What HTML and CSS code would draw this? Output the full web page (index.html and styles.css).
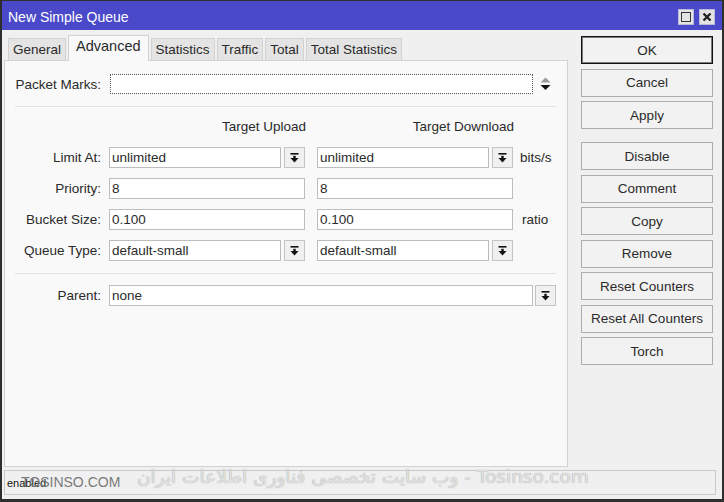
FILE: index.html
```html
<!DOCTYPE html>
<html>
<head>
    <title>New Simple Queue</title>
    <link rel="stylesheet" href="styles.css">
</head>
<body>
    <div class="window">
        <div class="titlebar">
            <span class="title">New Simple Queue</span>
            <div class="winbtns">
                <span class="winbtn"><span class="maxbox"></span></span>
                <span class="winbtn close">
                    <svg width="10" height="10" viewBox="0 0 10 10"><path d="M1.5 1.5 L8.5 8.5 M8.5 1.5 L1.5 8.5" stroke="#222" stroke-width="2.4"/></svg>
                </span>
            </div>
        </div>

        <div class="main">
            <div class="left">
                <div class="tabs">
                    <span class="tab">General</span>
                    <span class="tab active">Advanced</span>
                    <span class="tab">Statistics</span>
                    <span class="tab">Traffic</span>
                    <span class="tab">Total</span>
                    <span class="tab">Total Statistics</span>
                </div>

                <div class="panel">
                    <div class="row marks">
                        <label class="lbl">Packet Marks:</label>
                        <div class="field dotted"></div>
                        <svg class="spin" width="11" height="14" viewBox="0 0 11 14">
                            <path d="M5.5 0.5 L10.5 5.5 L0.5 5.5 Z" fill="#9a9a9a"/>
                            <path d="M0.5 8 L10.5 8 L5.5 13 Z" fill="#111"/>
                        </svg>
                    </div>

                    <div class="sep"></div>

                    <div class="heads">
                        <span class="head">Target Upload</span>
                        <span class="head">Target Download</span>
                    </div>

                    <div class="rows">
                        <div class="row">
                            <label class="lbl">Limit At:</label>
                            <div class="field short">unlimited</div>
                            <span class="drop"><svg width="9" height="10" viewBox="0 0 9 10"><rect x="0.5" y="0" width="8" height="1.6" fill="#111"/><rect x="3.3" y="2.8" width="2.4" height="2.4" fill="#111"/><path d="M0.5 5 L8.5 5 L4.5 9.5 Z" fill="#111"/></svg></span>
                            <div class="field short second">unlimited</div>
                            <span class="drop"><svg width="9" height="10" viewBox="0 0 9 10"><rect x="0.5" y="0" width="8" height="1.6" fill="#111"/><rect x="3.3" y="2.8" width="2.4" height="2.4" fill="#111"/><path d="M0.5 5 L8.5 5 L4.5 9.5 Z" fill="#111"/></svg></span>
                            <span class="unit">bits/s</span>
                        </div>
                        <div class="row">
                            <label class="lbl">Priority:</label>
                            <div class="field wide">8</div>
                            <div class="field wide second">8</div>
                        </div>
                        <div class="row">
                            <label class="lbl">Bucket Size:</label>
                            <div class="field wide">0.100</div>
                            <div class="field wide second">0.100</div>
                            <span class="unit ratio">ratio</span>
                        </div>
                        <div class="row">
                            <label class="lbl">Queue Type:</label>
                            <div class="field short">default-small</div>
                            <span class="drop"><svg width="9" height="10" viewBox="0 0 9 10"><rect x="0.5" y="0" width="8" height="1.6" fill="#111"/><rect x="3.3" y="2.8" width="2.4" height="2.4" fill="#111"/><path d="M0.5 5 L8.5 5 L4.5 9.5 Z" fill="#111"/></svg></span>
                            <div class="field short second">default-small</div>
                            <span class="drop"><svg width="9" height="10" viewBox="0 0 9 10"><rect x="0.5" y="0" width="8" height="1.6" fill="#111"/><rect x="3.3" y="2.8" width="2.4" height="2.4" fill="#111"/><path d="M0.5 5 L8.5 5 L4.5 9.5 Z" fill="#111"/></svg></span>
                        </div>
                    </div>

                    <div class="sep low"></div>

                    <div class="row parent">
                        <label class="lbl">Parent:</label>
                        <div class="field long">none</div>
                        <span class="drop tight"><svg width="9" height="10" viewBox="0 0 9 10"><rect x="0.5" y="0" width="8" height="1.6" fill="#111"/><rect x="3.3" y="2.8" width="2.4" height="2.4" fill="#111"/><path d="M0.5 5 L8.5 5 L4.5 9.5 Z" fill="#111"/></svg></span>
                    </div>
                </div>
            </div>

            <div class="side">
                <button class="btn default">OK</button>
                <button class="btn">Cancel</button>
                <button class="btn">Apply</button>
                <div class="gap"></div>
                <button class="btn">Disable</button>
                <button class="btn">Comment</button>
                <button class="btn">Copy</button>
                <button class="btn">Remove</button>
                <button class="btn">Reset Counters</button>
                <button class="btn">Reset All Counters</button>
                <button class="btn">Torch</button>
            </div>
        </div>

        <div class="status">enabled</div>

        <!-- watermark burned into the screenshot -->
        <span class="mark-small">TOSINSO.COM</span>
        <span class="mark-big">وب سایت تخصصی فناوری اطلاعات ایران - Tosinso.com</span>
    </div>
</body>
</html>
```

FILE: styles.css
```css
body {
    margin: 0;
    padding: 0;
    font-family: "Liberation Sans", Arial, sans-serif;
    font-size: 13.5px;
    color: #2a2a2a;
    background-color: #f0f0f0;
}

.window {
    position: relative;
    width: 724px;
    height: 502px;
    box-sizing: border-box;
    border: 2px solid #2e2e2e;
    border-top-width: 1px;
    border-bottom-width: 3px;
    background-color: #f0f0f0;
    display: flex;
    flex-direction: column;
    overflow: hidden;
}

.titlebar {
    height: 29px;
    background-color: #4a49c9;
    display: flex;
    align-items: center;
    justify-content: space-between;
    padding: 0 7px 0 6px;
    flex-shrink: 0;
}

.title {
    color: #fff;
    font-size: 14px;
    margin-top: 3px;
}

.winbtns {
    display: flex;
    gap: 5px;
    margin-top: 2px;
}

.winbtn {
    width: 16px;
    height: 16px;
    background-color: #e4e4e4;
    border: 1px solid #b9b9d8;
    box-sizing: border-box;
    display: flex;
    align-items: center;
    justify-content: center;
}

.maxbox {
    width: 10px;
    height: 10px;
    box-sizing: border-box;
    border: 1.5px solid #333;
}

.main {
    display: flex;
    gap: 13px;
    padding: 5px 0 0 2px;
    height: 437px;
    box-sizing: border-box;
    flex-shrink: 0;
}

.left {
    width: 564px;
    display: flex;
    flex-direction: column;
}

.tabs {
    display: flex;
    align-items: flex-end;
    gap: 2px;
    height: 25px;
    padding-left: 4px;
}

.tab {
    height: 22px;
    line-height: 22px;
    padding: 0 4px;
    background-color: #e4e4e4;
    border: 1px solid #d2d2d2;
    border-bottom: none;
    box-sizing: border-box;
}

.tab.active {
    height: 26px;
    line-height: 21px;
    padding: 0 7px;
    font-size: 14.5px;
    background-color: #f9f9f9;
    margin-bottom: -1px;
    position: relative;
    z-index: 1;
}

.panel {
    height: 407px;
    box-sizing: border-box;
    border: 1px solid #d2d2d2;
    background-color: #f9f9f9;
}

.row {
    display: flex;
    align-items: center;
    height: 21px;
}

.lbl {
    width: 96px;
    text-align: right;
    margin-right: 8px;
    flex-shrink: 0;
}

.field {
    height: 21px;
    line-height: 19px;
    box-sizing: border-box;
    border: 1px solid #bdbdbd;
    background-color: #fff;
    padding-left: 2px;
    white-space: nowrap;
}

.marks {
    margin-top: 13px;
    height: 20px;
}

.field.dotted {
    width: 423px;
    height: 20px;
    margin-left: 1px;
    border: 1px dotted #555;
    background-color: #fff;
}

.spin {
    margin-left: 7px;
}

.sep {
    height: 1px;
    width: 541px;
    margin: 12px 0 0 10px;
    background-color: #e2e2e2;
}

.sep.low {
    margin-top: 12px;
}

.heads {
    display: flex;
    margin: 12px 0 0 104px;
    line-height: 16px;
}

.head {
    width: 197px;
    text-align: right;
}

.head + .head {
    width: 197px;
    margin-left: 11px;
}

.rows {
    display: flex;
    flex-direction: column;
    gap: 10px;
    margin-top: 12px;
}

.field.short {
    width: 172px;
}

.field.wide {
    width: 196px;
}

.field.second {
    margin-left: 12px;
}

.field.long {
    width: 424px;
}

.drop {
    width: 21px;
    height: 21px;
    margin-left: 3px;
    box-sizing: border-box;
    border: 1px solid #c4c4c4;
    background-color: #f0f0f0;
    display: flex;
    align-items: center;
    justify-content: center;
}

.drop.tight {
    margin-left: 2px;
}

.unit {
    margin-left: 7px;
}

.unit.ratio {
    margin-left: 9px;
}

.parent {
    margin-top: 11px;
}

.side {
    width: 132px;
    padding-top: 1px;
    display: flex;
    flex-direction: column;
    gap: 4.5px;
}

.gap {
    height: 4px;
}

.btn {
    height: 28px;
    font-family: "Liberation Sans", Arial, sans-serif;
    font-size: 13.5px;
    color: #2a2a2a;
    background-color: #f2f2f2;
    border: 1px solid #adadad;
    padding: 0;
}

.btn.default {
    border: 1px solid #111;
    box-shadow: inset 0 0 0 1px #7a7a7a;
}

.status {
    height: 25px;
    margin: 3px 6px 0 2px;
    box-sizing: border-box;
    border: 1px solid #c9c9c9;
    padding-left: 2px;
    line-height: 24px;
    font-size: 11px;
    color: #111;
    flex-shrink: 0;
}

.mark-small {
    position: absolute;
    left: 19px;
    top: 473px;
    font-size: 14px;
    color: #7a7a7a;
}

.mark-big {
    position: absolute;
    left: 135px;
    top: 465px;
    font-family: "DejaVu Sans", sans-serif;
    font-size: 18.5px;
    color: #e2e2e2;
    text-shadow: 0 0 1px #8c8c8c;
    white-space: nowrap;
}
```
